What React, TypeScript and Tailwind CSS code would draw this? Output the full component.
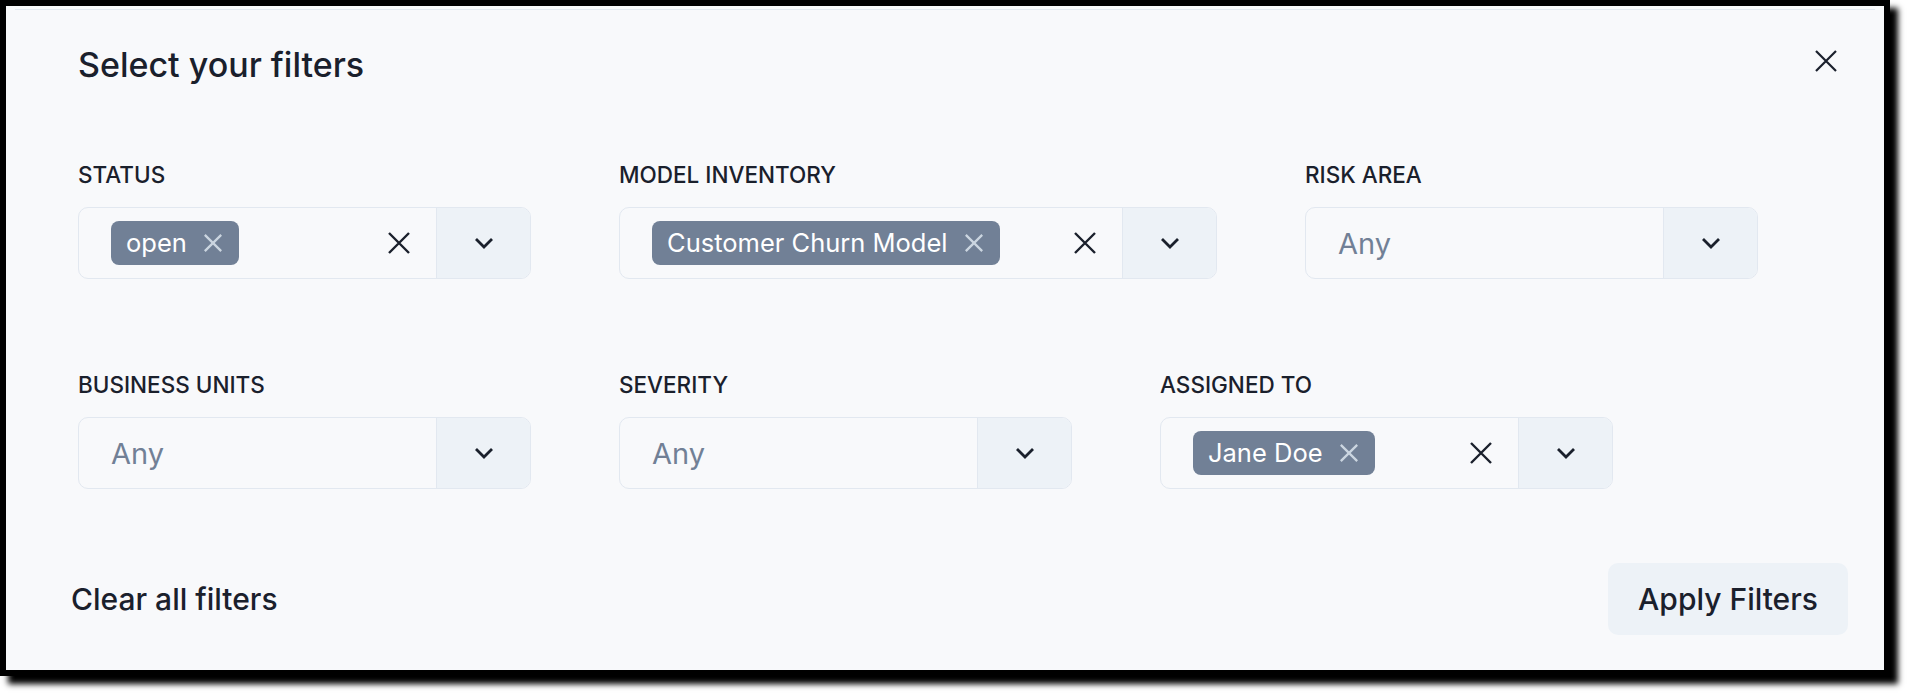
import React from "react";

type Field = {
  label: string;
  width: string;
  tag?: string;
};

const FIELDS: Field[] = [
  { label: "Status", width: "w-[453px]", tag: "open" },
  { label: "Model Inventory", width: "w-[598px]", tag: "Customer Churn Model" },
  { label: "Risk Area", width: "w-[453px]" },
  { label: "Business Units", width: "w-[453px]" },
  { label: "Severity", width: "w-[453px]" },
  { label: "Assigned To", width: "w-[453px]", tag: "Jane Doe" },
];

function XIcon({ size, stroke, className }: { size: number; stroke: number; className?: string }) {
  return (
    <svg width={size} height={size} viewBox="0 0 22 22" className={className} fill="none">
      <path d="M1 1 L21 21 M21 1 L1 21" stroke="currentColor" strokeWidth={stroke} />
    </svg>
  );
}

function Chevron() {
  return (
    <svg width="20" height="12" viewBox="0 0 20 12" fill="none" className="text-[#1a202c]">
      <polyline points="2,2 10,10 18,2" stroke="currentColor" strokeWidth="2.8" />
    </svg>
  );
}

function FilterField({ field }: { field: Field }) {
  return (
    <div className={`flex flex-col ${field.width}`}>
      <label className="mb-[20px] h-[24px] text-[22.5px] leading-[24px] font-medium uppercase text-[#1a202c]">
        {field.label}
      </label>
      <div className="flex h-[72px] items-stretch overflow-hidden rounded-[10px] border border-[#e2e8f0]">
        <div className="flex flex-1 items-center pl-[32px]">
          {field.tag ? (
            <span className="flex h-[44px] items-center gap-[17px] rounded-[8px] bg-[#718096] pl-[15px] pr-[17px] text-[25.5px] leading-none text-white">
              {field.tag}
              <XIcon size={18} stroke={2.8} className="text-[#cbd5e0]" />
            </span>
          ) : (
            <span className="text-[29px] leading-none text-[#718096]">Any</span>
          )}
        </div>
        {field.tag && (
          <div className="flex items-center pr-[26px] pl-[22px] text-[#1a202c]">
            <XIcon size={22} stroke={2.4} />
          </div>
        )}
        <div className="flex w-[94px] items-center justify-center border-l border-[#e2e8f0] bg-[#edf2f7]">
          <Chevron />
        </div>
      </div>
    </div>
  );
}

export default function App() {
  return (
    <div className="min-h-[696px] w-[1910px] bg-white font-['Inter',sans-serif]">
      <div className="relative w-[1890px] border-[6px] border-black bg-[#f8f9fb] shadow-[8px_8px_6px_#000]">
        {/* faint top rule */}
        <div className="mx-[9px] mt-[3px] h-px bg-[#e2e8f0]" />

        {/* Header */}
        <h2 className="mt-[35px] px-[72px] text-[34px] leading-[40px] font-medium text-[#1a202c]">
          Select your filters
        </h2>
        <button className="absolute right-[47px] top-[44px] text-[#1a202c]">
          <XIcon size={22} stroke={2.2} />
        </button>

        {/* Fields */}
        <div className="mt-[78px] flex flex-wrap gap-x-[88px] gap-y-[94px] px-[72px]">
          {FIELDS.map((f) => (
            <FilterField key={f.label} field={f} />
          ))}
        </div>

        {/* Footer */}
        <div className="mt-[74px] flex items-center justify-between pl-[35px] pr-[36px] pb-[35px]">
          <button className="h-[72px] rounded-[10px] px-[30px] text-[30px] font-medium text-[#1a202c]">
            Clear all filters
          </button>
          <button className="h-[72px] rounded-[10px] bg-[#edf2f7] px-[30px] text-[30px] font-medium text-[#1a202c]">
            Apply Filters
          </button>
        </div>
      </div>
    </div>
  );
}
